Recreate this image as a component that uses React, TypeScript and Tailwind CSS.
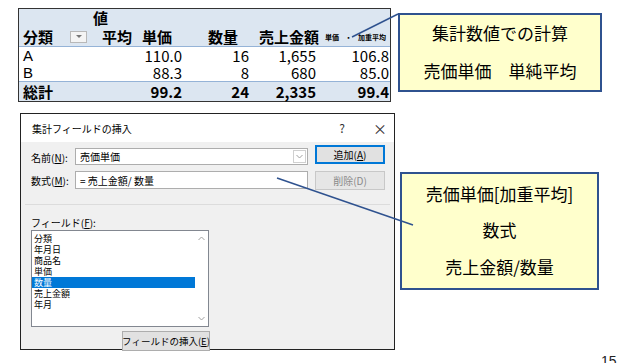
const jp = "font-['Noto_Sans_CJK_JP','Noto_Sans',sans-serif]";

function Chevron({ up = false }: { up?: boolean }) {
  return (
    <svg width="7" height="5" viewBox="0 0 7 5" className={up ? "rotate-180" : ""}>
      <path d="M0.5 1 L3.5 4 L6.5 1" fill="none" stroke="#a0a0a0" strokeWidth="1" />
    </svg>
  );
}

function PivotTable() {
  const cell = "flex items-center justify-end";
  return (
    <div className={`w-[373px] border border-[#333] text-black ${jp}`}>
      <div className="flex h-[18px] bg-[#dce6f1]">
        <div className="w-[72px]" />
        <div className="pl-[2px] text-[15px] font-bold leading-[18px]">値</div>
      </div>
      <div className="flex h-[20px] bg-[#dce6f1] border-b border-[#95b3d7] text-[15px] font-bold leading-[20px]">
        <div className="flex w-[72px] items-center pl-[4px]">
          <span>分類</span>
          <span className="ml-[17px] flex h-[12px] w-[17px] items-center justify-center border border-[#b8b8b8] bg-[#f4f4f4]">
            <svg width="6" height="4" viewBox="0 0 6 4"><path d="M0 0 L6 0 L3 3 Z" fill="#777" /></svg>
          </span>
        </div>
        <div className={`${cell} w-[95px] pr-[14px] gap-[10px]`}>
          <span>平均</span>
          <span>単価</span>
        </div>
        <div className={`${cell} w-[67px] pr-[15px]`}>数量</div>
        <div className={`${cell} w-[67px] pr-[1px]`}>売上金額</div>
        <div className={`${cell} w-[70px] pr-[4px] gap-[6px] text-[7px]`}>
          <span>単価</span>
          <span>・</span>
          <span>加重平均</span>
        </div>
      </div>
      {[
        ["A", "110.0", "16", "1,655", "106.8"],
        ["B", "88.3", "8", "680", "85.0"],
      ].map((r) => (
        <div key={r[0]} className="flex h-[17px] text-[15px] leading-[17px]">
          <div className="w-[72px] pl-[4px] font-['Liberation_Sans',sans-serif]">{r[0]}</div>
          <div className={`${cell} w-[95px] pr-[4px]`}>{r[1]}</div>
          <div className={`${cell} w-[67px] pr-[4px]`}>{r[2]}</div>
          <div className={`${cell} w-[67px] pr-[4px]`}>{r[3]}</div>
          <div className={`${cell} w-[70px] pr-[1px]`}>{r[4]}</div>
        </div>
      ))}
      <div className="flex h-[20px] bg-[#dce6f1] border-t border-[#95b3d7] text-[15px] font-bold leading-[19px]">
        <div className="w-[72px] pl-[4px]">総計</div>
        <div className={`${cell} w-[95px] pr-[4px]`}>99.2</div>
        <div className={`${cell} w-[67px] pr-[4px]`}>24</div>
        <div className={`${cell} w-[67px] pr-[4px]`}>2,335</div>
        <div className={`${cell} w-[70px] pr-[1px]`}>99.4</div>
      </div>
    </div>
  );
}

function Dialog() {
  const fields = ["分類", "年月日", "商品名", "単価", "数量", "売上金額", "年月"];
  return (
    <div className={`h-[237px] w-[375px] whitespace-nowrap border border-[#222] bg-[#f0f0f0] text-[10px] text-black ${jp}`}>
      <div className="flex h-[28px] items-center bg-white pl-[11px] pr-[7px]">
        <span>集計フィールドの挿入</span>
        <span className="ml-auto mr-[28px] text-[12px] text-[#333]">?</span>
        <span className="text-[14px] leading-none text-[#333]">×</span>
      </div>
      <div className="pl-[10px] pt-[3px]">
        <div className="flex h-[20px] items-start">
          <div className="mt-[5px] w-[44px]">
            名前(<u>N</u>):
          </div>
          <div className="mt-[3px] flex h-[17px] w-[233px] items-center justify-between border border-[#adadad] bg-white pl-[4px] pr-[1px]">
            <span>売価単価</span>
            <span className="flex h-[13px] w-[13px] items-center justify-center border border-[#d0d0d0]">
              <Chevron />
            </span>
          </div>
          <div className="ml-[7px] flex h-[19px] w-[70px] items-center justify-center border border-[#0078d7] bg-[#e1e1e1] shadow-[inset_0_0_0_1px_#0078d7]">
            追加(<u>A</u>)
          </div>
        </div>
        <div className="mt-[6px] flex h-[19px] items-start">
          <div className="mt-[2px] w-[44px]">
            数式(<u>M</u>):
          </div>
          <div className="flex h-[18px] w-[233px] items-center border border-[#adadad] bg-white pl-[4px]">
            = 売上金額/ 数量
          </div>
          <div className="ml-[7px] flex h-[19px] w-[70px] items-center justify-center border border-[#c8c8c8] bg-[#e6e6e6] text-[#8a8a8a]">
            削除(D)
          </div>
        </div>
        <div className="ml-[-6px] mr-[4px] mt-[14px] h-px bg-[#dcdcdc]" />
        <div className="mt-[11px] leading-[14px]">
          フィールド(<u>F</u>):
        </div>
        <div className="flex h-[97px] w-[178px] border border-[#828790] bg-white">
          <div className="flex-1 pt-[2px] text-[9px]">
            {fields.map((f) => (
              <div
                key={f}
                className={`flex h-[11px] items-center pl-[2px] leading-[11px] ${f === "数量" ? "bg-[#0078d7] text-white" : ""}`}
              >
                {f}
              </div>
            ))}
          </div>
          <div className="flex w-[13px] flex-col items-center justify-between py-[5px]">
            <Chevron up />
            <Chevron />
          </div>
        </div>
        <div className="ml-[91px] mt-[4px] flex h-[20px] w-[88px] items-center justify-center border border-[#adadad] bg-[#e1e1e1] text-[9.5px]">
          フィールドの挿入(<u>E</u>)
        </div>
      </div>
    </div>
  );
}

function Callout({ lines, className }: { lines: string[]; className: string }) {
  return (
    <div
      className={`flex flex-col items-center justify-center border-2 border-[#2f528f] bg-[#ffffcc] text-[17px] text-black ${jp} ${className}`}
    >
      {lines.map((l) => (
        <div key={l}>{l}</div>
      ))}
    </div>
  );
}

export default function App() {
  return (
    <div className="relative h-[363px] w-[618px] overflow-hidden bg-white">
      <div className="flex pl-[18px] pt-[8px]">
        <PivotTable />
        <Callout
          lines={["集計数値での計算", "売価単価　単純平均"]}
          className="ml-[7px] mt-[5px] h-[79px] w-[204px] gap-[12px] pb-[2px]"
        />
      </div>
      <div className="mt-[11px] flex pl-[20px]">
        <Dialog />
        <Callout
          lines={["売価単価[加重平均]", "数式", "売上金額/数量"]}
          className="ml-[5px] mt-[59px] h-[118px] w-[199px] gap-[11px] pb-[2px]"
        />
      </div>
      <svg className="pointer-events-none absolute left-0 top-0" width="618" height="363">
        <line x1="398" y1="14" x2="352" y2="37" stroke="#2f528f" strokeWidth="1.5" />
        <line x1="277" y1="178" x2="413" y2="225" stroke="#2f528f" strokeWidth="1.5" />
      </svg>
      <div className="absolute left-[601px] top-[353px] font-['Liberation_Sans',sans-serif] text-[14px] leading-[16px] text-[#222]">
        15
      </div>
    </div>
  );
}
